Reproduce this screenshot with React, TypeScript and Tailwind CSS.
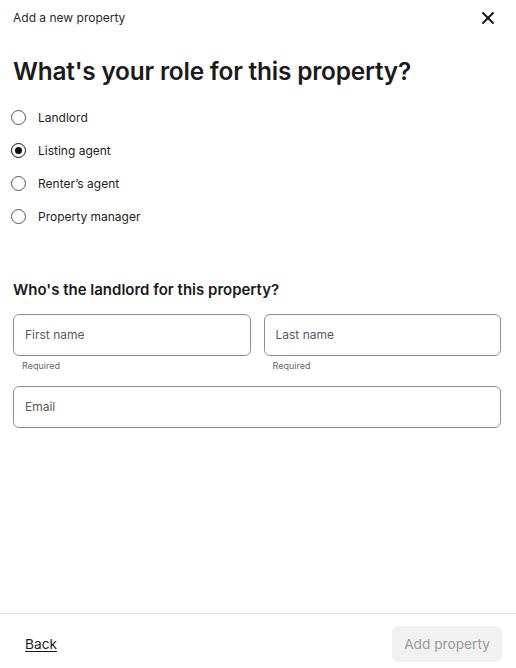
import { X } from 'lucide-react';

const roles = ['Landlord', 'Listing agent', 'Renter’s agent', 'Property manager'];

function Radio({ label, checked }: { label: string; checked?: boolean }) {
  return (
    <label className="flex items-center h-[33px] gap-[12px] -ml-[2px] text-[12px] text-[#222]">
      <span
        className={
          'flex items-center justify-center w-[15px] h-[15px] rounded-full border-[1.5px] ' +
          (checked ? 'border-[#111]' : 'border-[#555]')
        }
      >
        {checked && <span className="w-[7px] h-[7px] rounded-full bg-[#111]" />}
      </span>
      {label}
    </label>
  );
}

function Field({ placeholder, hint }: { placeholder: string; hint?: string }) {
  return (
    <div className="flex-1">
      <div className="h-[42px] rounded-[6px] border border-[#8f8f8f] flex items-center px-[11px] text-[12px] text-[#5a5a5a]">
        {placeholder}
      </div>
      {hint && <div className="text-[9px] text-[#666] pl-[9px] pt-[3px] leading-[13px]">{hint}</div>}
    </div>
  );
}

export default function App() {
  return (
    <div
      className="w-[516px] h-[668px] bg-white flex flex-col text-[#1f1f1f]"
      style={{ fontFamily: 'Inter, "Noto Sans", sans-serif' }}
    >
      <div className="flex-1 pl-[13px] pr-[15px]">
        <div className="flex items-center justify-between h-[35px]">
          <span className="text-[12px] text-[#2a2a2a]">Add a new property</span>
          <X className="w-[20px] h-[20px] mr-[3px] text-[#111]" strokeWidth={2.2} />
        </div>
        <h1 className="mt-[19px] text-[24.4px] leading-[34px] font-semibold tracking-[-0.2px] text-[#1b1b1b]">
          What's your role for this property?
        </h1>
        <div className="mt-[13px] flex flex-col">
          {roles.map((r) => (
            <Radio key={r} label={r} checked={r === 'Listing agent'} />
          ))}
        </div>
        <h2 className="mt-[46px] text-[15px] leading-[22px] font-semibold text-[#1b1b1b]">
          Who's the landlord for this property?
        </h2>
        <div className="mt-[13px] flex gap-[13px]">
          <Field placeholder="First name" hint="Required" />
          <Field placeholder="Last name" hint="Required" />
        </div>
        <div className="mt-[14px]">
          <Field placeholder="Email" />
        </div>
      </div>
      <div className="h-[55px] border-t border-[#e4e4e4] flex items-start justify-between pt-[12px] pl-[25px] pr-[14px]">
        <button className="h-[36px] text-[13.7px] underline underline-offset-2 text-[#1b1b1b]">Back</button>
        <button className="h-[36px] w-[110px] rounded-[6px] bg-[#f1f1f1] text-[13.7px] text-[#9a9a9a]">
          Add property
        </button>
      </div>
    </div>
  );
}
